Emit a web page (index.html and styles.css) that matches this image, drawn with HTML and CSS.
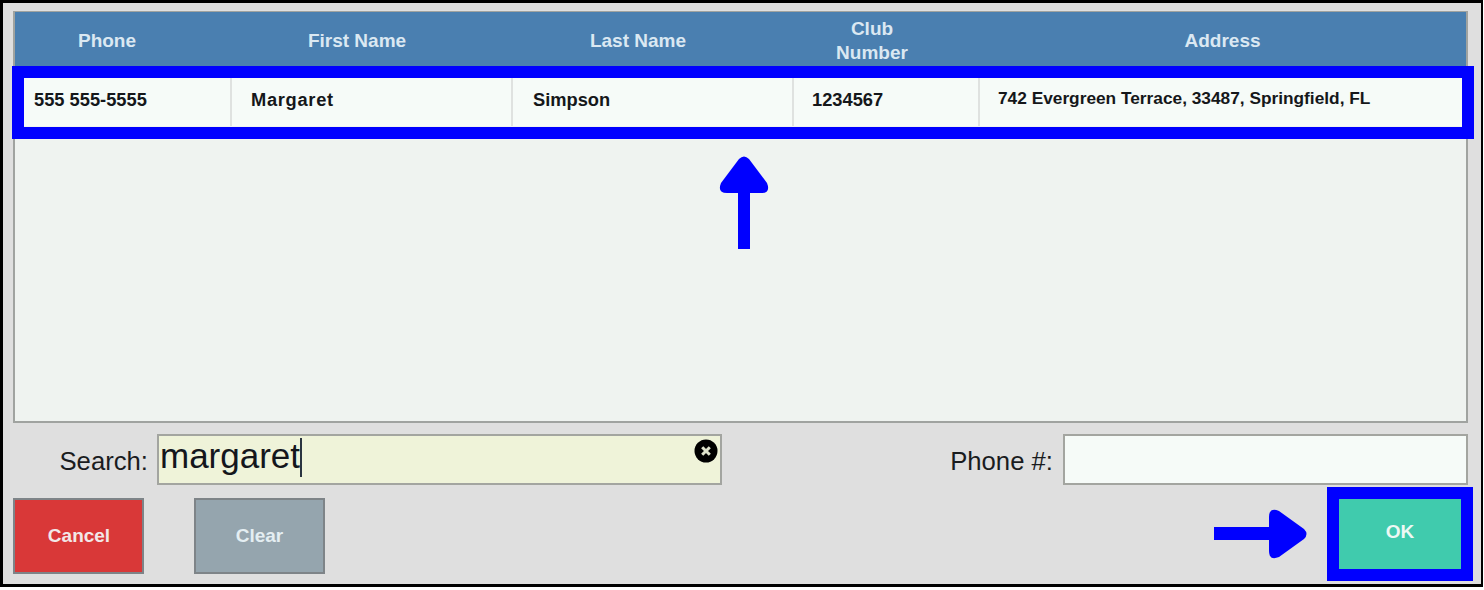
FILE: index.html
```html
<!DOCTYPE html>
<html lang="en">
<head>
<meta charset="utf-8">
<title>Customer search</title>
<link rel="stylesheet" href="styles.css">
</head>
<body>
<main class="dialog">
  <section class="grid">
    <div class="head">
      <div class="hc h1">Phone</div>
      <div class="hc h2">First Name</div>
      <div class="hc h3">Last Name</div>
      <div class="hc h4">Club<br>Number</div>
      <div class="hc h5">Address</div>
    </div>
    <div class="row">
      <div class="cell first">555 555-5555</div>
      <div class="cell c2 wide">Margaret</div>
      <div class="cell c3">Simpson</div>
      <div class="cell c4">1234567</div>
      <div class="cell c5 addr">742 Evergreen Terrace, 33487, Springfield, FL</div>
    </div>
  </section>
  <div class="fields">
    <label class="lab lab-search">Search:</label>
    <div class="input search"><span class="typed">margaret</span><span class="caret"></span>
      <svg class="clear-x" viewBox="0 0 24 24" width="24" height="24"><circle cx="12" cy="12" r="11.5" fill="#000"/><path d="M8.2 8.2l7.6 7.6M15.800 8.2l-7.6 7.6" stroke="#dfe3cc" stroke-width="3" fill="none"/></svg>
    </div>
    <label class="lab lab-phone">Phone #:</label>
    <div class="input phone"></div>
  </div>
  <div class="actions">
    <button class="btn cancel">Cancel</button>
    <button class="btn clear">Clear</button>
    <svg class="arrow-right" width="94" height="50" viewBox="0 0 94 50"><path d="M0 18H55V8Q55 -2 65 2L90 20Q95 25 90 30L65 48Q55 52 55 42V31H0Z" fill="#0000ff"/></svg>
    <button class="btn ok">OK</button>
  </div>
  <div class="highlight-row"></div>
  <svg class="arrow-up" width="50" height="93" viewBox="0 0 50 93"><path d="M19 93V37H8Q-2 37 2 27L20 3Q25 -2 30 3L48 27Q52 37 42 37H31V93Z" fill="#0000ff"/></svg>
</main>
</body>
</html>
```
FILE: styles.css
```css
* { box-sizing: border-box; }
html, body { margin: 0; background: #fff; }
body { width: 1484px; height: 590px; font-family: "Liberation Sans", Arial, sans-serif; overflow: hidden; }
.dialog { position: relative; width: 1483px; height: 587px; border: 3px solid #000; border-right-width: 2px; background: #dfdfdf; padding: 8px 13px 0 10px; }
.grid { height: 412px; border: 2px solid #a0a3a0; border-top: 1px solid #a0a3a0; background: #eff3f0; }
.head { display: flex; height: 55px; background: #4a7fb0; color: #dbe8f2; font-weight: bold; font-size: 19px; line-height: 24px; text-align: center; }
.hc { display: flex; align-items: center; justify-content: center; padding-top: 2px; }
.h1 { width: 184px; }
.h2 { width: 314px; padding-left: 2px; }
.h3 { width: 250px; }
.h4 { width: 218px; }
.h5 { flex: 1; padding-right: 2px; }
.row { display: flex; height: 48px; margin-top: 11px; margin-left: 8px; margin-right: 4px; background: #f6fbf8; font-weight: bold; font-size: 18.300px; color: #15171a; }
.cell { display: flex; align-items: center; padding-left: 19px; padding-bottom: 5px; border-left: 2px solid #dfe2e0; }
.first { width: 207px; border-left: 0; padding-left: 11px; }
.c2 { width: 281px; }
.c3 { width: 281px; padding-left: 20px; }
.c4 { width: 186px; padding-left: 18px; }
.c5 { flex: 1; padding-left: 18px; }
.wide { letter-spacing: 0.700px; }
.addr { font-size: 17.300px; padding-bottom: 7px; }
.fields { display: flex; height: 52px; margin-top: 11px; align-items: flex-start; }
.lab { font-size: 25.700px; height: 52px; color: #1a1c1e; display: flex; align-items: center; padding-top: 3px; }
.lab-search { width: 135px; justify-content: flex-end; margin-right: 9px; }
.input { border: 2px solid #a3a5a0; height: 51px; position: relative; }
.search { width: 565px; background: #eff3d9; display: flex; align-items: flex-start; }
.typed { font-size: 35px; line-height: 40px; color: #14161c; margin-left: 1px; }
.caret { width: 2px; height: 39px; background: #2a3440; margin-top: 2px; }
.clear-x { position: absolute; right: 2px; top: 3px; }
.lab-phone { width: 331px; justify-content: flex-end; margin-right: 10px; }
.phone { width: 405px; background: #f6fbf8; }
.actions { display: flex; margin-top: 12px; align-items: flex-start; position: relative; }
.btn { width: 131px; height: 76px; border: 2px solid #7e8488; font-family: inherit; font-weight: bold; font-size: 19px; color: #f2e8e8; padding: 0; }
.cancel { background: #d93838; padding-left: 1px; }
.clear { background: #95a5ae; margin-left: 50px; color: #e4eef2; }
.arrow-right { margin-left: auto; margin-top: 11px; margin-right: 19px; }
.ok { width: 146px; height: 94px; margin-top: -11px; margin-right: -5px; border: 12px solid #0000ff; background: #40cbad; color: #eef8f4; padding-bottom: 4px; }
.highlight-row { position: absolute; left: 9px; top: 63px; width: 1462px; height: 73px; border: 12px solid #0000ff; }
.arrow-up { position: absolute; left: 716px; top: 153px; }
```
